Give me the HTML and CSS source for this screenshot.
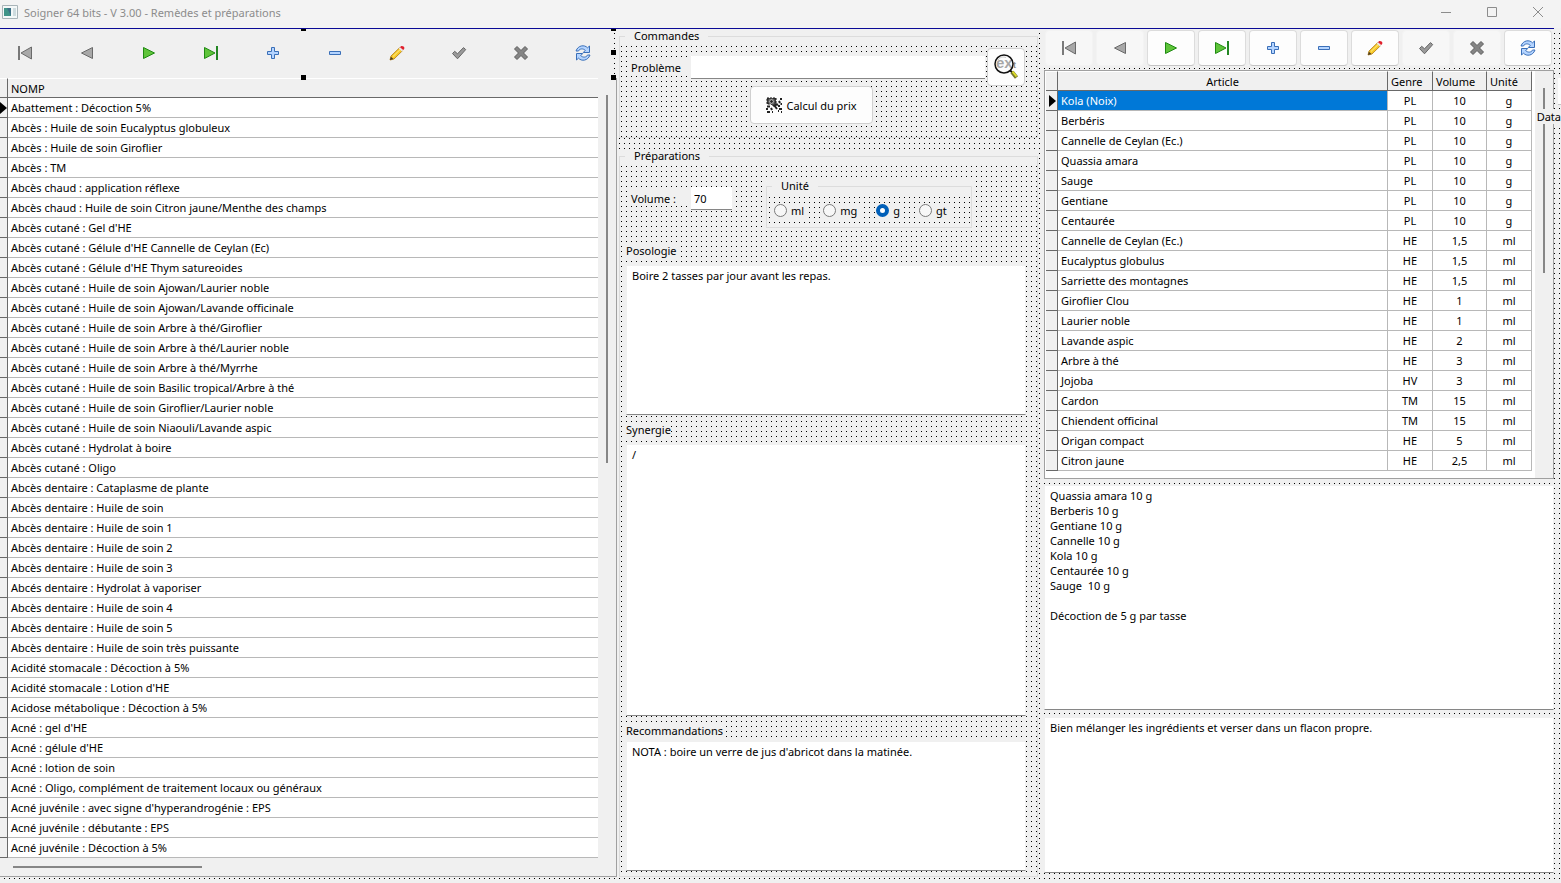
FILE: index.html
```html
<!DOCTYPE html>
<html lang="fr">
<head>
  <meta charset="UTF-8" />
  <meta name="viewport" content="width=device-width, initial-scale=1.0" />
  <title>Soigner 64 bits - V 3.00 - Remèdes et préparations</title>
  <link rel="stylesheet" href="styles.css">
</head>
<body>
  <svg class="sprite" aria-hidden="true">
    <symbol id="i-first" viewBox="0 0 16 16">
      <path d="M2 1v14" stroke="#5a5a5a" stroke-width="1.6" />
      <path d="M14.5 2v12L4 8z" fill="#a8a8a8" stroke="#6a6a6a" />
    </symbol>
    <symbol id="i-prior" viewBox="0 0 16 16">
      <path d="M13.5 2.500v11L2.500 8z" fill="#a8a8a8" stroke="#6a6a6a" />
    </symbol>
    <symbol id="i-next" viewBox="0 0 16 16">
      <path d="M2.500 2.500v11L13.500 8z" fill="#5fc43a" stroke="#1f8a12" />
    </symbol>
    <symbol id="i-last" viewBox="0 0 16 16">
      <path d="M1.500 2.500v11L12 8z" fill="#5fc43a" stroke="#1f8a12" />
      <path d="M14 1v14" stroke="#0c7a0c" stroke-width="1.800" />
    </symbol>
    <symbol id="i-insert" viewBox="0 0 16 16">
      <path d="M6.500 2.500h3v4h4v3h-4v4h-3v-4h-4v-3h4z" fill="#b4d4ff" stroke="#3a6fb8" />
    </symbol>
    <symbol id="i-delete" viewBox="0 0 16 16">
      <path d="M2.500 6.500h11v3h-11z" fill="#b4d4ff" stroke="#3a6fb8" />
    </symbol>
    <symbol id="i-edit" viewBox="0 0 16 16">
      <path d="M2 11L10.500 2.800l3 2.900L5 14l-4 1z" fill="#f7c92a" stroke="#b07a12" stroke-width=".8" />
      <path d="M4 11.500l7.500-7.300" stroke="#fff08a" />
      <path d="M9.800 3.500l1.500-1.500 3 2.900-1.500 1.500z" fill="#e8e8e8" />
      <path d="M11 2.300C12 .5 13.500.6 14.600 1.600s1.200 2.500-.4 3.300z" fill="#e0202c" />
      <path d="M1 15l.9-3.300 2.500 2.400z" fill="#4a3a20" />
    </symbol>
    <symbol id="i-post" viewBox="0 0 16 16">
      <path d="M1.500 8.500l2.200-2.200 2.800 2.500 6-6.200 2.200 2-8.200 9.200z" fill="#9a9a9a" stroke="#666" />
    </symbol>
    <symbol id="i-cancel" viewBox="0 0 16 16">
      <path d="M4 1.500l4 4 4-4 2.500 2.500-4 4 4 4-2.500 2.500-4-4-4 4L1.500 12l4-4-4-4z" fill="#858585" stroke="#5c5c5c" />
    </symbol>
    <symbol id="i-refresh" viewBox="0 0 16 16">
      <path d="M1 6C3 .2 9.500-.6 12.500 2.800L14.500 1v6.500H8.300l2-2.200C8 3.200 4.500 3.500 3.500 6z" fill="#b4d4ff" stroke="#3a6fb8" />
      <path d="M15 10c-2 5.800-8.500 6.600-11.500 3.200L1.500 15V8.500h6.200l-2 2.200c2.300 2.100 5.800 1.800 6.800-.7z" fill="#b4d4ff" stroke="#3a6fb8" />
    </symbol>
  </svg>

  <header class="titlebar">
    <svg class="app-icon" viewBox="0 0 16 14" aria-hidden="true">
      <path d="M.5.500h15v13H.5z" fill="#f4f8f8" stroke="#a9b4b8" />
      <path d="M2 3h7v8H2z" fill="#3f9488" />
      <path d="M5 3h4v8z" fill="#3c6f86" />
      <path d="M11 3h3v8h-3z" fill="#cfdcdf" />
    </svg>
    <h1>Soigner 64 bits - V 3.00 - Remèdes et préparations</h1>
    <div class="win-buttons">
      <button type="button" aria-label="Réduire"><svg viewBox="0 0 12 12"><path d="M1 6.500h10" /></svg></button>
      <button type="button" aria-label="Agrandir"><svg viewBox="0 0 12 12"><path d="M1.500 1.500h9v9h-9z" /></svg></button>
      <button type="button" aria-label="Fermer"><svg viewBox="0 0 12 12"><path d="M1 1l10 10M11 1L1 11" /></svg></button>
    </div>
  </header>
  <div class="form-line"></div>

  <main class="form">
    <section class="col-left">
      <div class="nav nav-flat"></div>
      <div class="list-panel">
        <div class="list-body">
          <table class="grid" id="remedes">
            <colgroup><col class="c-mark"><col></colgroup>
            <thead><tr><th></th><th>NOMP</th></tr></thead>
            <tbody></tbody>
          </table>
          <div class="vscroll"><span class="thumb"></span></div>
        </div>
        <div class="hscroll"><span class="thumb"></span></div>
      </div>
      <i class="handle h-top"></i>
      <i class="handle h-bottom"></i>
      <i class="handle h-tr"></i>
      <i class="handle h-right"></i>
      <i class="handle h-br"></i>
    </section>

    <section class="col-mid">
      <div class="group">
        <fieldset>
          <legend>Commandes</legend>
          <div class="dots commands">
            <div class="problem-row">
              <label for="probleme">Problème</label>
              <input type="text" id="probleme">
              <button type="button" class="btn btn-search" aria-label="Rechercher">
                <svg viewBox="0 0 26 26">
                  <text x="3" y="14" class="lens-text">ex</text>
                  <text x="20" y="14" class="lens-text lens-small">t</text>
                  <circle cx="11" cy="10" r="9" fill="#fff" fill-opacity=".25" stroke="#111" stroke-width="1.500" />
                  <path d="M5 6c2-3 5-3.500 8-2.500" fill="none" stroke="#c8c8c8" />
                  <path d="M17 16.500l2.500 2" stroke="#111" stroke-width="2" />
                  <path d="M19 18l4.500 5.500" stroke="#77772a" stroke-width="4" />
                  <path d="M19.500 17.500l4 5" stroke="#dcdc28" stroke-width="2" />
                </svg>
              </button>
            </div>
            <button type="button" class="btn btn-price">
              <svg viewBox="0 0 16 16" fill="none" stroke="#222">
                <path d="M1 1h9v8H7L5 7H1z" fill="#444" stroke="#111" stroke-dasharray="2 1" />
                <circle cx="5.500" cy="4.500" r="2.500" fill="#ccc" stroke="#777" />
                <circle cx="5.500" cy="4.500" r="1" fill="#222" />
                <path d="M1 9.500h3M0 12h2M1 15h3M5 11l1 2M6 15h1" stroke-width="2" />
                <path d="M8 8l3 4M10 7l2 1" stroke-width="2" />
                <path d="M15 1v2M13 4l1 2M15.500 6v2M12 9h2M15 11v2M12 14h1M15 15h1M13 12h1" stroke-width="2" />
              </svg>
              Calcul du prix
            </button>
          </div>
        </fieldset>
      </div>

      <div class="group group-prep">
        <fieldset>
          <legend>Préparations</legend>
          <div class="dots prep">
            <div class="volume-row">
              <label for="volume">Volume :</label>
              <input type="text" id="volume" value="70">
              <div class="unit-box">
                <fieldset>
                  <legend>Unité</legend>
                  <div class="dots units">
                    <label><input type="radio" name="unite">ml</label>
                    <label><input type="radio" name="unite">mg</label>
                    <label><input type="radio" name="unite" checked>g</label>
                    <label><input type="radio" name="unite">gt</label>
                  </div>
                </fieldset>
              </div>
            </div>
            <label class="memo-label" for="posologie">Posologie</label>
            <textarea id="posologie" class="memo memo-poso">Boire 2 tasses par jour avant les repas.</textarea>
            <label class="memo-label" for="synergie">Synergie</label>
            <textarea id="synergie" class="memo memo-syn">/</textarea>
            <label class="memo-label tight" for="recommandations">Recommandations</label>
            <textarea id="recommandations" class="memo memo-rec">NOTA : boire un verre de jus d'abricot dans la matinée.</textarea>
          </div>
        </fieldset>
      </div>
    </section>

    <section class="col-right">
      <div class="nav nav-raised"></div>
      <div class="article-panel">
        <table class="grid" id="articles">
          <colgroup><col class="c-mark"><col><col class="c-genre"><col class="c-volume"><col class="c-unite"></colgroup>
          <thead><tr><th></th><th>Article</th><th>Genre</th><th>Volume</th><th>Unité</th></tr></thead>
          <tbody></tbody>
        </table>
        <div class="vscroll"><span class="thumb"></span></div>
      </div>
      <textarea class="memo memo-comp" aria-label="Composition">Quassia amara 10 g
Berberis 10 g
Gentiane 10 g
Cannelle 10 g
Kola 10 g
Centaurée 10 g
Sauge  10 g

Décoction de 5 g par tasse</textarea>
      <textarea class="memo memo-mode" aria-label="Mode opératoire">Bien mélanger les ingrédients et verser dans un flacon propre.</textarea>
      <i class="data-icon"></i>
      <span class="data-name">Data</span>
    </section>
  </main>

  <script>
    const navButtons = [
      ["first", "Premier", true], ["prior", "Précédent", true], ["next", "Suivant"], ["last", "Dernier"],
      ["insert", "Ajouter"], ["delete", "Supprimer"], ["edit", "Modifier"],
      ["post", "Valider", true], ["cancel", "Annuler", true], ["refresh", "Rafraîchir"],
    ];

    const remedes = [
      "Abattement : Décoction 5%",
      "Abcès : Huile de soin Eucalyptus globuleux",
      "Abcès : Huile de soin Giroflier",
      "Abcès : TM",
      "Abcès chaud : application réflexe",
      "Abcès chaud : Huile de soin Citron jaune/Menthe des champs",
      "Abcès cutané : Gel d'HE",
      "Abcès cutané : Gélule d'HE Cannelle de Ceylan (Ec)",
      "Abcès cutané : Gélule d'HE Thym satureoides",
      "Abcès cutané : Huile de soin Ajowan/Laurier noble",
      "Abcès cutané : Huile de soin Ajowan/Lavande officinale",
      "Abcès cutané : Huile de soin Arbre à thé/Giroflier",
      "Abcès cutané : Huile de soin Arbre à thé/Laurier noble",
      "Abcès cutané : Huile de soin Arbre à thé/Myrrhe",
      "Abcès cutané : Huile de soin Basilic tropical/Arbre à thé",
      "Abcès cutané : Huile de soin Giroflier/Laurier noble",
      "Abcès cutané : Huile de soin Niaouli/Lavande aspic",
      "Abcès cutané : Hydrolat à boire",
      "Abcès cutané : Oligo",
      "Abcès dentaire : Cataplasme de plante",
      "Abcès dentaire : Huile de soin",
      "Abcès dentaire : Huile de soin 1",
      "Abcès dentaire : Huile de soin 2",
      "Abcès dentaire : Huile de soin 3",
      "Abcés dentaire : Hydrolat à vaporiser",
      "Abcès dentaire : Huile de soin 4",
      "Abcès dentaire : Huile de soin 5",
      "Abcès dentaire : Huile de soin très puissante",
      "Acidité stomacale : Décoction à 5%",
      "Acidité stomacale : Lotion d'HE",
      "Acidose métabolique : Décoction à 5%",
      "Acné : gel d'HE",
      "Acné : gélule d'HE",
      "Acné : lotion de soin",
      "Acné : Oligo, complément de traitement locaux ou généraux",
      "Acné juvénile : avec signe d'hyperandrogénie : EPS",
      "Acné juvénile : débutante : EPS",
      "Acné juvénile : Décoction à 5%",
    ];

    const articles = [
      ["Kola (Noix)", "PL", "10", "g"],
      ["Berbéris", "PL", "10", "g"],
      ["Cannelle de Ceylan (Ec.)", "PL", "10", "g"],
      ["Quassia amara", "PL", "10", "g"],
      ["Sauge", "PL", "10", "g"],
      ["Gentiane", "PL", "10", "g"],
      ["Centaurée", "PL", "10", "g"],
      ["Cannelle de Ceylan (Ec.)", "HE", "1,5", "ml"],
      ["Eucalyptus globulus", "HE", "1,5", "ml"],
      ["Sarriette des montagnes", "HE", "1,5", "ml"],
      ["Giroflier Clou", "HE", "1", "ml"],
      ["Laurier noble", "HE", "1", "ml"],
      ["Lavande aspic", "HE", "2", "ml"],
      ["Arbre à thé", "HE", "3", "ml"],
      ["Jojoba", "HV", "3", "ml"],
      ["Cardon", "TM", "15", "ml"],
      ["Chiendent officinal", "TM", "15", "ml"],
      ["Origan compact", "HE", "5", "ml"],
      ["Citron jaune", "HE", "2,5", "ml"],
    ];

    document.querySelectorAll(".nav").forEach(nav => {
      nav.innerHTML = navButtons.map(([icon, label, off]) =>
        `<button type="button" aria-label="${label}"${off ? " disabled" : ""}><svg><use href="#i-${icon}"/></svg></button>`
      ).join("");
    });

    function fill(id, rows) {
      document.querySelector(`#${id} tbody`).innerHTML = rows.map((cells, i) =>
        `<tr${i === 0 ? ' class="current"' : ""}><td></td>${cells.map(c => `<td>${c}</td>`).join("")}</tr>`
      ).join("");
    }

    fill("remedes", remedes.map(r => [r]));
    fill("articles", articles);
  </script>
</body>
</html>
```

FILE: styles.css
```css
* {
  box-sizing: border-box;
}
body {
  margin: 0;
  min-height: 100vh;
  padding-bottom: 2px;
  display: flex;
  flex-direction: column;
  overflow-x: hidden;
  background: #f0f0f0;
  color: #000;
  font-family: "Noto Sans", "Open Sans", sans-serif;
  font-size: 11px;
  line-height: 15px;
}
button, input, textarea {
  font: inherit;
  color: inherit;
  margin: 0;
}
.sprite {
  position: absolute;
  width: 0;
  height: 0;
}

/* title bar */
.titlebar {
  display: flex;
  align-items: center;
  height: 28px;
  padding: 0 0 4px 2px;
  background: #f3f3f3;
}
.app-icon {
  width: 16px;
  height: 14px;
  margin-right: 6px;
}
h1 {
  flex: 1;
  margin: 0;
  font-size: 11px;
  font-weight: normal;
  color: #8c8c8c;
}
.win-buttons {
  display: flex;
}
.win-buttons button {
  width: 46px;
  height: 24px;
  padding: 0;
  border: 0;
  background: none;
}
.win-buttons svg {
  display: block;
  width: 12px;
  height: 12px;
  margin: 0 auto;
  fill: none;
  stroke: #8c8c8c;
}
.form-line {
  height: 1px;
  margin-right: 7px;
  background: #0a0a96;
}

/* design grid */
.form, .dots {
  background-image: conic-gradient(from 270deg at 1px 1px, #000 90deg, transparent 0);
  background-size: 5px 5px;
}
.form {
  flex: 1;
  display: grid;
  grid-template-columns: minmax(0, 617fr) minmax(0, 424fr) minmax(0, 520fr);
  background-position: -1px 4px;
}

/* navigators */
.nav {
  display: flex;
  background: #f0f0f0;
}
.nav button {
  flex: 1;
  padding: 0;
  border: 0;
  background: none;
}
.nav svg {
  display: block;
  width: 16px;
  height: 16px;
  margin: 0 auto;
}
.nav-flat {
  height: 48px;
  margin: 0 3px 0 -6px;
}
.nav-raised {
  height: 38px;
  gap: 3px;
  padding: 1px 2px 1px 1px;
}
.nav-raised button {
  background: #fdfdfd;
  border: 1px solid #dcdcdc;
  border-bottom-color: #c4c4c4;
  border-radius: 4px;
}
.nav-raised button:disabled {
  background: #f7f7f7;
  border-color: #f3f3f3;
}

/* data grids */
.grid {
  flex: 1;
  width: 100%;
  table-layout: fixed;
  border-collapse: separate;
  border-spacing: 0;
  background: #fff;
}
.grid th, .grid td {
  height: 20px;
  padding: 0 3px;
  border-bottom: 1px solid #b8b8b8;
  white-space: nowrap;
  overflow: hidden;
}
.grid th {
  background: #f0f0f0;
  border-top: 1px solid #fff;
  border-bottom-color: #696969;
  font-weight: normal;
  text-align: left;
}
.grid td:first-child, .grid th:first-child {
  padding: 0;
  background: #f0f0f0;
  border-right: 1px solid #696969;
  border-bottom-color: #696969;
}
.current td:first-child::before {
  content: "";
  display: block;
  width: 0;
  margin: 0 1px 0 auto;
  border: 6px solid transparent;
  border-left: 7px solid #000;
  border-right: 0;
}
.vscroll {
  width: 18px;
  background: #f0f0f0;
}
.thumb {
  display: block;
  background: #868686;
}

/* left column */
.col-left {
  position: relative;
  display: flex;
  flex-direction: column;
  padding-bottom: 4px;
}
.list-panel {
  flex: 1;
  margin-top: 1px;
  background: #f0f0f0;
  border-right: 1px solid #a0a0a0;
  border-bottom: 1px solid #a0a0a0;
}
.list-body {
  display: flex;
}
#remedes .c-mark {
  width: 8px;
}
.list-body .vscroll .thumb {
  width: 2px;
  height: 368px;
  margin: 17px 0 0 8px;
}
.hscroll {
  padding: 8px 0 0 13px;
}
.hscroll .thumb {
  width: 189px;
  height: 2px;
}
.handle {
  position: absolute;
  width: 5px;
  height: 5px;
  background: #000;
}
.h-top {
  top: 0;
  left: 301px;
  height: 2px;
}
.h-bottom {
  top: 46px;
  left: 301px;
}
.h-tr {
  top: 0;
  right: 1px;
  height: 2px;
}
.h-right {
  top: 21px;
  right: 1px;
}
.h-br {
  top: 46px;
  right: 1px;
}

/* middle column */
.col-mid {
  display: flex;
  flex-direction: column;
  padding: 0 3px 4px 2px;
}
.group, .unit-box {
  background: #f0f0f0;
}
.group {
  margin-bottom: 11px;
}
fieldset {
  min-width: 0;
  margin: 0;
  padding: 0;
  border: 1px solid #dcdcdc;
}
legend {
  margin-left: 5px;
  padding: 0 9px;
  line-height: 14px;
}
.commands {
  display: flex;
  flex-direction: column;
  height: 91px;
  margin-top: 3px;
  padding: 2px 12px 0 11px;
  background-position: 1px 0;
}
.problem-row {
  display: flex;
  align-items: center;
}
.problem-row label, .volume-row > label {
  width: 56px;
  margin-right: 4px;
  background: #f0f0f0;
}
input[type="text"] {
  height: 23px;
  padding: 0 3px;
  border: 0;
  border-bottom: 1px solid #868686;
  background: #fff;
}
#probleme {
  flex: 1;
  min-width: 0;
}
.btn {
  background: #fdfdfd;
  border: 1px solid #d0d0d0;
  border-radius: 4px;
}
.btn-search {
  width: 38px;
  height: 38px;
  margin-left: 2px;
  padding: 0 5px;
}
.btn-search svg {
  display: block;
  width: 26px;
  height: 26px;
}
.lens-text {
  font-family: "Liberation Sans", sans-serif;
  font-size: 15px;
  font-weight: bold;
  fill: #8a8a8a;
}
.lens-small {
  font-size: 9px;
}
.btn-price {
  display: flex;
  align-items: center;
  justify-content: center;
  gap: 4px;
  width: 123px;
  height: 38px;
  margin-left: 119px;
  padding: 0;
}
.btn-price svg {
  width: 16px;
  height: 16px;
}
.group-prep {
  flex: 1;
  display: flex;
  margin-bottom: 0;
}
.group-prep > fieldset {
  flex: 1;
  display: flex;
  flex-direction: column;
}
.prep {
  flex: 1;
  display: flex;
  flex-direction: column;
  align-items: flex-start;
  height: 100%;
  margin-top: 3px;
  padding: 13px 11px 5px 6px;
  background-position: 1px 0;
}
.volume-row {
  display: flex;
  align-items: flex-start;
  padding-left: 5px;
}
.volume-row > label {
  margin-top: 12px;
}
#volume {
  width: 41px;
  margin-top: 8px;
}
.unit-box {
  width: 206px;
  margin-left: 34px;
}
.units {
  display: flex;
  gap: 15px;
  height: 34px;
  padding: 10px 7px 0;
  background-position: 2px 4px;
}
.units label {
  display: flex;
  align-items: center;
  gap: 4px;
  height: 15px;
  padding-right: 4px;
  background: #f0f0f0;
}
input[type="radio"] {
  appearance: none;
  width: 13px;
  height: 13px;
  border: 1px solid #7a7a7a;
  border-radius: 50%;
  background: #f7f7f7;
}
input[type="radio"]:checked {
  border: 4px solid #005fb8;
  background: #fff;
}
.memo-label {
  margin: 7px 0;
  background: #f0f0f0;
}
.volume-row + .memo-label {
  margin-top: 15px;
}
.memo-label.tight {
  margin-bottom: 3px;
}
.memo {
  display: block;
  width: 100%;
  min-height: 60px;
  padding: 2px 5px;
  border: 1px solid #f0f0f0;
  border-bottom-color: #868686;
  background: #fff;
  resize: none;
  overflow: hidden;
}
.memo-poso {
  flex: 144 1 0;
}
.memo-syn {
  flex: 265 1 0;
}
.memo-rec {
  flex: 124 1 0;
}

/* right column */
.col-right {
  position: relative;
  display: flex;
  flex-direction: column;
  padding: 0 7px 8px 3px;
  overflow: hidden;
}
.article-panel {
  display: flex;
  align-items: flex-start;
  margin: 3px 0 6px;
  padding-left: 1px;
  background: #fff;
  border: 1px solid #a0a0a0;
}
#articles {
  margin: 0 3px 7px 0;
}
#articles .c-mark {
  width: 12px;
}
.c-genre, .c-unite {
  width: 45px;
}
.c-volume {
  width: 54px;
}
#articles th:not(:first-child) {
  border-right: 1px solid #696969;
}
#articles th:nth-child(2) {
  text-align: center;
}
#articles td:not(:first-child) {
  border-right: 1px solid #b8b8b8;
}
#articles td:nth-child(n+3) {
  text-align: center;
}
#articles .current td:nth-child(2) {
  background: #0078d7;
  color: #fff;
}
.article-panel .vscroll {
  align-self: stretch;
}
.article-panel .thumb {
  width: 2px;
  height: 185px;
  margin: 17px 0 0 8px;
}
.memo-comp {
  flex: 226 1 0;
  margin-bottom: 7px;
}
.memo-mode {
  flex: 155 1 0;
}
.data-icon {
  position: absolute;
  top: 49px;
  right: 0;
  width: 3px;
  height: 27px;
  background: #fdfdfd;
  border-bottom: 1px solid #c4c4c4;
}
.data-name {
  position: absolute;
  top: 80px;
  right: 0;
  background: #f0f0f0;
}
```
